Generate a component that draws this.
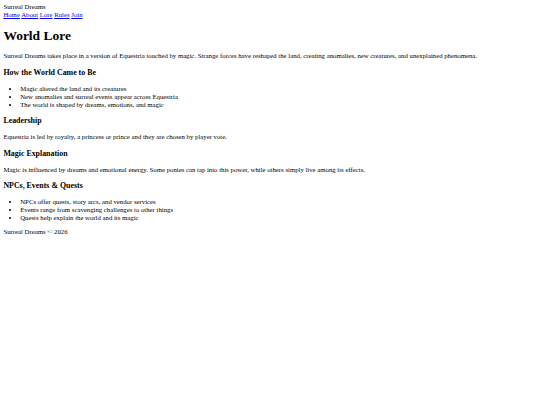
export default function App() {
  const worldItems = [
    "Magic altered the land and its creatures",
    "New anomalies and surreal events appear across Equestria",
    "The world is shaped by dreams, emotions, and magic",
  ];
  const npcItems = [
    "NPCs offer quests, story arcs, and vendor services",
    "Events range from scavenging challenges to other things",
    "Quests help explain the world and its magic",
  ];
  const links = ["Home", "About", "Lore", "Rules", "Join"];

  return (
    <div className="m-[3.375px] font-['Liberation_Serif',serif] text-[6.75px] leading-[1.15] text-black">
      <header>
        <div>Surreal Dreams</div>
        <nav>
          {links.map((l, i) => (
            <span key={l}>
              <a href="#" className="text-[#0000ee] underline">{l}</a>
              {i < links.length - 1 ? " " : ""}
            </span>
          ))}
        </nav>
      </header>

      <main>
        <h1 className="text-[13.5px] font-bold my-[9.045px]">World Lore</h1>
        <p className="my-[6.75px]">
          Surreal Dreams takes place in a version of Equestria touched by magic. Strange forces have reshaped the land, creating anomalies, new creatures, and unexplained phenomena.
        </p>

        <section>
          <h3 className="text-[7.9px] font-bold my-[7.9px]">How the World Came to Be</h3>
          <ul className="list-disc pl-[16.875px] my-[6.75px]">
            {worldItems.map(t => <li key={t}>{t}</li>)}
          </ul>
        </section>

        <section>
          <h3 className="text-[7.9px] font-bold my-[7.9px]">Leadership</h3>
          <p className="my-[6.75px]">Equestria is led by royalty, a princess or prince and they are chosen by player vote.</p>
        </section>

        <section>
          <h3 className="text-[7.9px] font-bold my-[7.9px]">Magic Explanation</h3>
          <p className="my-[6.75px]">Magic is influenced by dreams and emotional energy. Some ponies can tap into this power, while others simply live among its effects.</p>
        </section>

        <section>
          <h3 className="text-[7.9px] font-bold my-[7.9px]">NPCs, Events &amp; Quests</h3>
          <ul className="list-disc pl-[16.875px] my-[6.75px]">
            {npcItems.map(t => <li key={t}>{t}</li>)}
          </ul>
        </section>
      </main>

      <footer>Surreal Dreams © 2026</footer>
    </div>
  );
}
